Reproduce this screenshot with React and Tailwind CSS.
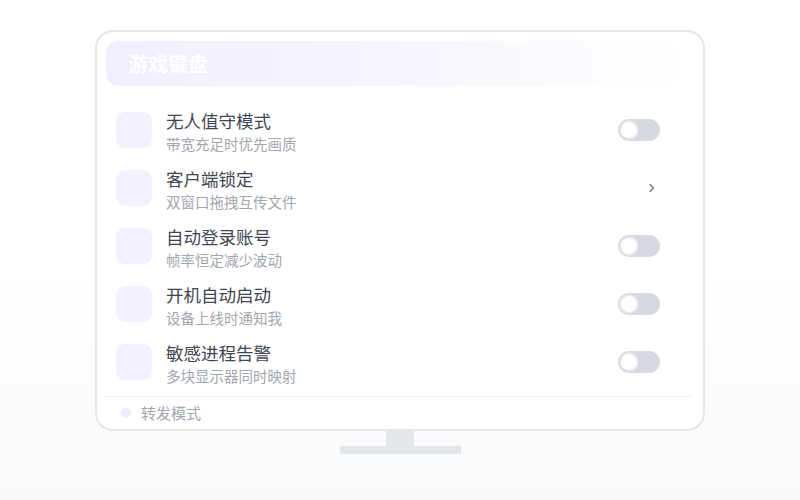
import React from 'react';

const rows = [
  { title: '无人值守模式', sub: '带宽充足时优先画质', kind: 'toggle' },
  { title: '客户端锁定', sub: '双窗口拖拽互传文件', kind: 'chevron' },
  { title: '自动登录账号', sub: '帧率恒定减少波动', kind: 'toggle' },
  { title: '开机自动启动', sub: '设备上线时通知我', kind: 'toggle' },
  { title: '敏感进程告警', sub: '多块显示器同时映射', kind: 'toggle' },
];

function Toggle() {
  return (
    <div className="w-[42px] h-[22px] rounded-full bg-[#d6d9df] p-[1px] flex items-center">
      <div className="w-[20px] h-[20px] rounded-full bg-white border-2 border-[#e3e5ea]" />
    </div>
  );
}

function Chevron() {
  return (
    <svg width="10" height="12" viewBox="0 0 10 12" className="mr-[3px]">
      <path d="M3 2.5 L6.5 6 L3 9.5" fill="none" stroke="#6b7280" strokeWidth="1.3" strokeLinecap="round" strokeLinejoin="round" />
    </svg>
  );
}

export default function App() {
  return (
    <div
      className="w-[800px] h-[500px] bg-gradient-to-b from-white via-white to-[#f9fafb] flex flex-col items-center pt-[30px]"
      style={{ fontFamily: '"Noto Sans CJK SC", "Noto Sans", sans-serif' }}
    >
      <div className="w-[610px] h-[401px] bg-white border-2 border-[#e3e6eb] rounded-[18px] px-[9px] pt-[9px] flex flex-col">
        <div className="h-[45px] rounded-[12px] bg-gradient-to-r from-[#f1edff] via-[#f7f5ff] to-white flex items-center pl-[22px]">
          <span className="text-white font-bold text-[20px] leading-none">游戏键盘</span>
        </div>
        <div className="mt-[15px] flex flex-col">
          {rows.map((r) => (
            <div key={r.title} className="h-[58px] flex items-center pl-[10px] pr-[34px]">
              <div className="w-[36px] h-[36px] rounded-[9px] bg-[#f3f0ff]" />
              <div className="ml-[14px] flex flex-col flex-1 mt-[1px]">
                <span className="text-[17.5px] leading-[25px] text-[#3f4652]">{r.title}</span>
                <span className="text-[14.5px] leading-[21px] text-[#a1a6b0]">{r.sub}</span>
              </div>
              {r.kind === 'toggle' ? <Toggle /> : <Chevron />}
            </div>
          ))}
        </div>
        <div className="mt-[5px] h-px bg-[#eef0f3] mr-[2px]" />
        <div className="h-[32px] flex items-center pl-[15px]">
          <div className="w-[10px] h-[10px] rounded-full bg-[#efebff]" />
          <span className="ml-[10px] text-[15px] text-[#a1a6b0]">转发模式</span>
        </div>
      </div>
      <div className="w-[28px] h-[15px] bg-[#e3e6ea]" />
      <div className="w-[121px] h-[8px] bg-[#e3e6ea]" />
    </div>
  );
}
